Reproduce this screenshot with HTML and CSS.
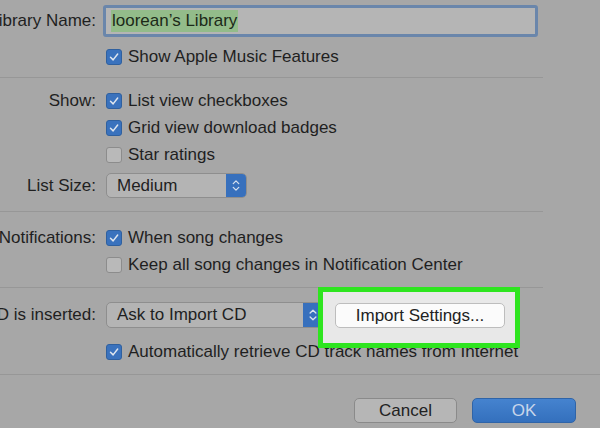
FILE: index.html
```html
<!DOCTYPE html>
<html>
<head>
<meta charset="utf-8">
<link rel="stylesheet" href="styles.css">
</head>
<body>
<div class="dialog">
  <section class="sec sec-lib">
    <div class="row row-field">
      <div class="label">Library Name:</div>
      <div class="field"><span class="sel">loorean’s Library</span></div>
    </div>
    <div class="row">
      <div class="label"></div>
      <label class="check"><span class="box on"><svg viewBox="0 0 16 16"><path d="M4 8.3 L7 11.3 L12.2 4.6"/></svg></span>Show Apple Music Features</label>
    </div>
  </section>
  <div class="sep"></div>
  <section class="sec sec-show">
    <div class="row">
      <div class="label">Show:</div>
      <label class="check"><span class="box on"><svg viewBox="0 0 16 16"><path d="M4 8.3 L7 11.3 L12.2 4.6"/></svg></span>List view checkboxes</label>
    </div>
    <div class="row">
      <div class="label"></div>
      <label class="check"><span class="box on"><svg viewBox="0 0 16 16"><path d="M4 8.3 L7 11.3 L12.2 4.6"/></svg></span>Grid view download badges</label>
    </div>
    <div class="row">
      <div class="label"></div>
      <label class="check"><span class="box"></span>Star ratings</label>
    </div>
    <div class="row row-popup">
      <div class="label">List Size:</div>
      <div class="popup popup-size"><span class="ptext">Medium</span><span class="stepper"><svg viewBox="0 0 20 25"><path d="M7 10.5 L10 7.5 L13 10.5 M7 14.5 L10 17.5 L13 14.5"/></svg></span></div>
    </div>
  </section>
  <div class="sep"></div>
  <section class="sec sec-notif">
    <div class="row">
      <div class="label">Notifications:</div>
      <label class="check"><span class="box on"><svg viewBox="0 0 16 16"><path d="M4 8.3 L7 11.3 L12.2 4.6"/></svg></span>When song changes</label>
    </div>
    <div class="row">
      <div class="label"></div>
      <label class="check"><span class="box"></span>Keep all song changes in Notification Center</label>
    </div>
  </section>
  <div class="sep"></div>
  <section class="sec sec-cd">
    <div class="row row-popup">
      <div class="label">When a CD is inserted:</div>
      <div class="popup popup-cd"><span class="ptext">Ask to Import CD</span><span class="stepper"><svg viewBox="0 0 20 25"><path d="M7 10.5 L10 7.5 L13 10.5 M7 14.5 L10 17.5 L13 14.5"/></svg></span></div>
    </div>
    <div class="row row-auto">
      <div class="label"></div>
      <label class="check"><span class="box on"><svg viewBox="0 0 16 16"><path d="M4 8.3 L7 11.3 L12.2 4.6"/></svg></span>Automatically retrieve CD track names from Internet</label>
    </div>
    <div class="highlight">
      <button class="btn btn-import">Import Settings...</button>
    </div>
  </section>
  <div class="sep sep-full"></div>
  <footer class="footer">
    <button class="btn btn-cancel">Cancel</button>
    <button class="btn btn-ok">OK</button>
  </footer>
</div>
</body>
</html>
```
FILE: styles.css
```css
html, body {
  margin: 0;
  padding: 0;
}
body {
  width: 600px;
  height: 428px;
  overflow: hidden;
  background: #a7a7a7;
  font-family: "Liberation Sans", Arial, sans-serif;
  font-size: 17px;
  color: #1f1f1f;
}
.dialog {
  width: 600px;
  height: 428px;
  background: #a7a7a7;
}
.sec {
  display: flex;
  flex-direction: column;
  position: relative;
}
.sec-lib { padding: 5px 0 7px; gap: 6px; }
.sec-show { padding: 9px 0 13px; }
.sec-notif { padding: 12px 0 9px; }
.sec-cd { padding: 14px 0 9px; gap: 10px; }

.row {
  display: flex;
  align-items: center;
  height: 27px;
}
.row-field { height: 32px; }
.row-popup { height: 25px; margin-top: 5px; }
.sec-cd .row-popup { margin-top: 0; height: 26px; }

.label {
  width: 96px;
  flex: none;
  display: flex;
  justify-content: flex-end;
  white-space: nowrap;
  margin-right: 10px;
}
.row-field .label { margin-right: 7px; }

.field {
  width: 424px;
  height: 26px;
  border: 3px solid #6a86ab;
  border-radius: 3px;
  background: #b5b5b5;
  display: flex;
  align-items: center;
  padding-left: 5px;
}
.sel {
  background: #93bc8a;
  line-height: 22px;
  padding: 0 1px;
  color: #1c2a18;
}

.check {
  display: flex;
  align-items: center;
  white-space: nowrap;
}
.box {
  width: 14px;
  height: 14px;
  border: 1px solid #8c8c8c;
  border-radius: 3px;
  background: #b9b9b9;
  margin-right: 6px;
  flex: none;
  display: flex;
}
.box.on {
  background: #3a72bd;
  border-color: #2f609f;
}
.box svg {
  width: 14px;
  height: 14px;
}
.box svg path {
  fill: none;
  stroke: #dfe6ef;
  stroke-width: 1.7;
  stroke-linecap: round;
  stroke-linejoin: round;
}

.popup {
  height: 100%;
  box-sizing: border-box;
  border: 1px solid #8e8e8e;
  border-radius: 5px;
  background: #b4b4b4;
  display: flex;
  align-items: center;
  overflow: hidden;
}
.popup-size { width: 141px; }
.popup-cd { width: 218px; }
.ptext {
  flex: 1;
  padding-left: 10px;
}
.stepper {
  width: 20px;
  height: 100%;
  background: #3770bd;
  display: flex;
}
.stepper svg {
  width: 20px;
  height: 100%;
}
.stepper path {
  fill: none;
  stroke: #d6e0ee;
  stroke-width: 1.4;
  stroke-linecap: round;
  stroke-linejoin: round;
}

.sep {
  width: 543px;
  height: 1px;
  background: #979797;
}
.sep-full { width: 600px; }

.highlight {
  position: absolute;
  left: 318px;
  top: -1px;
  width: 192px;
  height: 51px;
  border: 5px solid #2ee51f;
  background: #e8e8e8;
  display: flex;
  align-items: flex-start;
  justify-content: center;
  padding-top: 11px;
  box-sizing: content-box;
}
.highlight { height: 40px; }

.btn {
  font-family: "Liberation Sans", Arial, sans-serif;
  font-size: 17px;
  border-radius: 5px;
  height: 25px;
  padding: 0;
  box-sizing: border-box;
  cursor: default;
}
.btn-import {
  width: 170px;
  background: #fbfbfb;
  border: 1px solid #bdbdbd;
  color: #222;
  margin-left: 2px;
}
.footer {
  display: flex;
  padding: 23px 0 0 354px;
  gap: 15px;
}
.btn-cancel {
  width: 103px;
  background: #b6b6b6;
  border: 1px solid #8a8a8a;
  color: #222;
}
.btn-ok {
  width: 104px;
  background: linear-gradient(#4583cf, #3470bd);
  border: 1px solid #2f64a8;
  color: #c8d6ea;
}
```
